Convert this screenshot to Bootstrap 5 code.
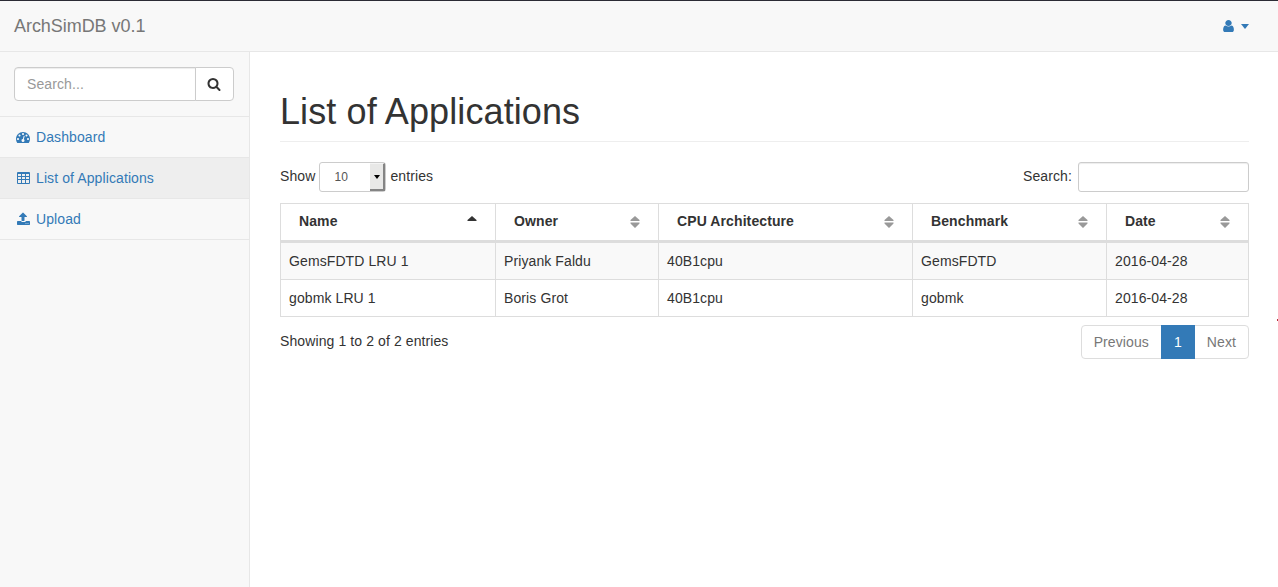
<!DOCTYPE html>
<html lang="en">
<head>
<meta charset="utf-8">
<meta name="viewport" content="width=device-width, initial-scale=1">
<title>ArchSimDB</title>
<link rel="stylesheet" href="https://cdn.jsdelivr.net/npm/bootstrap@5.3.0/dist/css/bootstrap.min.css">
<style>
body{font-family:"Liberation Sans",Arial,sans-serif;font-size:14px;line-height:20px;letter-spacing:.1px;color:#333;background:#f8f8f8;overflow:hidden}
a{color:#337ab7;text-decoration:none}
.shell{height:587px;border-top:1px solid #2b2b35}
.topbar{height:51px;background:#f8f8f8;border-bottom:1px solid #e7e7e7;padding:0 29px 0 14px;flex:none}
.topbar .navbar-brand{font-size:18px;line-height:20px;letter-spacing:-.05px;color:#777;padding:0;margin:0}
.fa-glyph{width:14px;height:14px;fill:currentColor;display:block;flex:none}
.topbar .fa-glyph{width:15px}
.caret-down{border:4px solid transparent;border-top:5px solid currentColor;border-bottom:0;margin-top:1px}
.side{width:250px;flex:none;border-right:1px solid #e7e7e7}
.side-search{padding:15px 15px 15px 14px;border-bottom:1px solid #e7e7e7}
.form-control,.side-search .btn{font-size:14px;line-height:20px;border:1px solid #ccc;border-radius:4px;background:#fff;box-shadow:inset 0 1px 1px rgba(0,0,0,.075)}
.side-search .form-control{height:34px;padding:6px 12px;color:#555;letter-spacing:.1px}
.form-control::placeholder{color:#999}
.side-search .btn{width:39px;padding:0 1px 0 0;color:#333;box-shadow:none}
.side .nav-link{color:#337ab7;height:41px;padding:0 15px 0 16px;gap:6px;border-bottom:1px solid #e7e7e7}
.side .nav-link.active{background:#eee}
main{background:#fff;padding:40px 29px 0 30px}
h1{font-size:36px;line-height:40px;height:50px;border-bottom:1px solid #eee;margin:0 0 20px;font-weight:400}
.len-box{width:67px;height:30px;border:1px solid #ccc;border-radius:3px;margin:0 4px;font-size:12px;color:#555;padding-left:14px}
.len-arrow{width:15px;height:28px;background:#e8e8e7;border-right:2px solid #848484;border-bottom:2px solid #848484;border-top:1px solid #f4f4f4;padding-left:1px}
.len-arrow i{border:3.5px solid transparent;border-top:4px solid #000;border-bottom:0}
.filter .form-control{width:171px;height:30px;border-radius:3px;margin-left:6px;padding:5px 10px}
.lift{padding-bottom:2px}
.apps{table-layout:fixed;width:969px;margin:11px 0 8px;border-collapse:separate;border-spacing:0;border:solid #ddd;border-width:1px 0 0 1px;color:#333}
.apps th,.apps td{border:solid #ddd;border-width:0 1px 1px 0;padding:8px;height:37px;line-height:20px;background:#fff;box-shadow:none}
.apps th{height:39px;padding:7px 18px 9px;border-bottom-width:3px}
.apps tbody tr:first-child td{background:#f9f9f9}
.sorter{width:10px;height:12px;fill:#999;flex:none;margin-top:2px}
.pagination{--bs-pagination-font-size:14px;--bs-pagination-padding-x:12px;--bs-pagination-padding-y:6px;--bs-pagination-border-color:#ddd;--bs-pagination-color:#777;--bs-pagination-active-bg:#337ab7;--bs-pagination-active-border-color:#337ab7;--bs-pagination-border-radius:4px;margin:0}
.page-link{line-height:20px;height:34px}
.speck{position:absolute;right:0;top:319px;width:1px;height:2px;background:#b5303c}
</style>
<script src="https://cdn.jsdelivr.net/npm/bootstrap@5.3.0/dist/js/bootstrap.bundle.min.js"></script>
</head>
<body>
<div class="shell d-flex flex-column">
  <nav class="topbar navbar flex-nowrap justify-content-between">
    <a class="navbar-brand" href="#">ArchSimDB v0.1</a>
    <a href="#" class="d-flex align-items-center" style="gap:5px">
      <svg class="fa-glyph" viewBox="0 0 1792 1792" preserveAspectRatio="none"><path d="M1536 1399q0 109-62.5 187t-150.5 78h-854q-88 0-150.5-78t-62.5-187q0-85 8.5-160.5t31.5-152 58.5-131 94-89 134.5-34.5q131 128 313 128t313-128q76 0 134.5 34.5t94 89 58.5 131 31.5 152 8.5 160.5zm-256-887q0 159-112.5 271.5t-271.5 112.5-271.5-112.5-112.5-271.5 112.5-271.5 271.5-112.5 271.5 112.5 112.5 271.5z"/></svg>
      <span class="caret-down"></span>
    </a>
  </nav>
  <div class="d-flex flex-grow-1">
    <aside class="side">
      <div class="side-search">
        <div class="input-group">
          <input class="form-control" type="text" placeholder="Search...">
          <button class="btn d-flex align-items-center justify-content-center" type="button">
            <svg class="fa-glyph" viewBox="0 0 1792 1792"><path d="M1216 832q0-185-131.5-316.5t-316.5-131.5-316.5 131.5-131.5 316.5 131.5 316.5 316.5 131.5 316.5-131.5 131.5-316.5zm512 832q0 52-38 90t-90 38q-54 0-90-38l-343-342q-179 124-399 124-143 0-273.5-55.5t-225-150-150-225-55.5-273.5 55.5-273.5 150-225 225-150 273.5-55.5 273.5 55.5 225 150 150 225 55.5 273.5q0 220-124 399l343 343q37 37 37 90z"/></svg>
          </button>
        </div>
      </div>
      <nav class="nav flex-column">
        <a class="nav-link d-flex align-items-center" href="#">
          <svg class="fa-glyph" viewBox="0 0 1792 1792"><path d="M384 1152q0-53-37.5-90.5t-90.5-37.5-90.5 37.5-37.5 90.5 37.5 90.5 90.5 37.5 90.5-37.5 37.5-90.5zm192-448q0-53-37.5-90.5t-90.5-37.5-90.5 37.5-37.5 90.5 37.5 90.5 90.5 37.5 90.5-37.5 37.5-90.5zm428 481l101-382q6-26-7.5-48.5t-38.5-29.5-48 6.5-30 39.5l-101 382q-60 5-107 43.5t-63 98.5q-20 77 20 146t117 89 146-20 89-117q16-60-6-117t-72-91zm660-33q0-53-37.5-90.5t-90.5-37.5-90.5 37.5-37.5 90.5 37.5 90.5 90.5 37.5 90.5-37.5 37.5-90.5zm-640-640q0-53-37.5-90.5t-90.5-37.5-90.5 37.5-37.5 90.5 37.5 90.5 90.5 37.5 90.5-37.5 37.5-90.5zm448 192q0-53-37.5-90.5t-90.5-37.5-90.5 37.5-37.5 90.5 37.5 90.5 90.5 37.5 90.5-37.5 37.5-90.5zm320 448q0 261-141 483-19 29-54 29h-1402q-35 0-54-29-141-221-141-483 0-182 71-348t191-286 286-191 348-71 348 71 286 191 191 286 71 348z"/></svg>
          Dashboard</a>
        <a class="nav-link active d-flex align-items-center" href="#">
          <svg class="fa-glyph" viewBox="0 0 14 14"><path fill-rule="evenodd" d="M2 1h11a1 1 0 0 1 1 1v10a1 1 0 0 1-1 1H2a1 1 0 0 1-1-1V2a1 1 0 0 1 1-1zM2 3v2h3V3zM6 3v2h3V3zM10 3v2h3V3zM2 6v2h3V6zM6 6v2h3V6zM10 6v2h3V6zM2 9v3h3V9zM6 9v3h3V9zM10 9v3h3V9z"/></svg>
          List of Applications</a>
        <a class="nav-link d-flex align-items-center" href="#">
          <svg class="fa-glyph" viewBox="0 0 1792 1792"><path d="M1344 1472q0-26-19-45t-45-19-45 19-19 45 19 45 45 19 45-19 19-45zm256 0q0-26-19-45t-45-19-45 19-19 45 19 45 45 19 45-19 19-45zm192-224v320q0 40-28 68t-68 28h-1472q-40 0-68-28t-28-68v-320q0-40 28-68t68-28h427q21 56 70.5 92t110.5 36h256q61 0 110.5-36t70.5-92h427q40 0 68 28t28 68zm-389-648q-17 40-59 40h-256v448q0 26-19 45t-45 19h-256q-26 0-45-19t-19-45v-448h-256q-42 0-59-40-17-39 14-69l448-448q18-19 45-19t45 19l448 448q31 30 14 69z"/></svg>
          Upload</a>
      </nav>
    </aside>
    <main class="flex-grow-1">
      <h1>List of Applications</h1>
      <div class="d-flex justify-content-between">
        <div class="d-flex align-items-center"><span class="lift">Show</span>
          <div class="len-box d-flex align-items-center justify-content-between"><span>10</span><span class="len-arrow d-flex align-items-center justify-content-center"><i></i></span></div>
          <span class="lift">entries</span></div>
        <label class="filter d-flex align-items-center"><span class="lift">Search:</span><input class="form-control" type="search"></label>
      </div>
      <table class="apps table">
        <colgroup><col style="width:215px"><col style="width:163px"><col style="width:254px"><col style="width:194px"><col style="width:142px"></colgroup>
        <thead><tr>
          <th><div class="d-flex justify-content-between align-items-center">Name<svg class="sorter" viewBox="0 0 10 12" style="fill:#333"><path d="M5 0L9.5 4v1H.5V4z"/></svg></div></th>
          <th><div class="d-flex justify-content-between align-items-center">Owner<svg class="sorter" viewBox="0 0 10 12"><path d="M5 0l4.5 4v1H.5V4zM.5 6.5h9v1L5 12 .5 7.5z"/></svg></div></th>
          <th><div class="d-flex justify-content-between align-items-center">CPU Architecture<svg class="sorter" viewBox="0 0 10 12"><path d="M5 0l4.5 4v1H.5V4zM.5 6.5h9v1L5 12 .5 7.5z"/></svg></div></th>
          <th><div class="d-flex justify-content-between align-items-center">Benchmark<svg class="sorter" viewBox="0 0 10 12"><path d="M5 0l4.5 4v1H.5V4zM.5 6.5h9v1L5 12 .5 7.5z"/></svg></div></th>
          <th><div class="d-flex justify-content-between align-items-center">Date<svg class="sorter" viewBox="0 0 10 12"><path d="M5 0l4.5 4v1H.5V4zM.5 6.5h9v1L5 12 .5 7.5z"/></svg></div></th>
        </tr></thead>
        <tbody>
          <tr><td>GemsFDTD LRU 1</td><td>Priyank Faldu</td><td>40B1cpu</td><td>GemsFDTD</td><td>2016-04-28</td></tr>
          <tr><td>gobmk LRU 1</td><td>Boris Grot</td><td>40B1cpu</td><td>gobmk</td><td>2016-04-28</td></tr>
        </tbody>
      </table>
      <div class="d-flex justify-content-between align-items-center">
        <div class="lift">Showing 1 to 2 of 2 entries</div>
        <ul class="pagination">
          <li class="page-item"><a class="page-link" href="#">Previous</a></li>
          <li class="page-item active"><a class="page-link" href="#">1</a></li>
          <li class="page-item"><a class="page-link" href="#">Next</a></li>
        </ul>
      </div>
    </main>
  </div>
</div>
<span class="speck"></span>
</body>
</html>
